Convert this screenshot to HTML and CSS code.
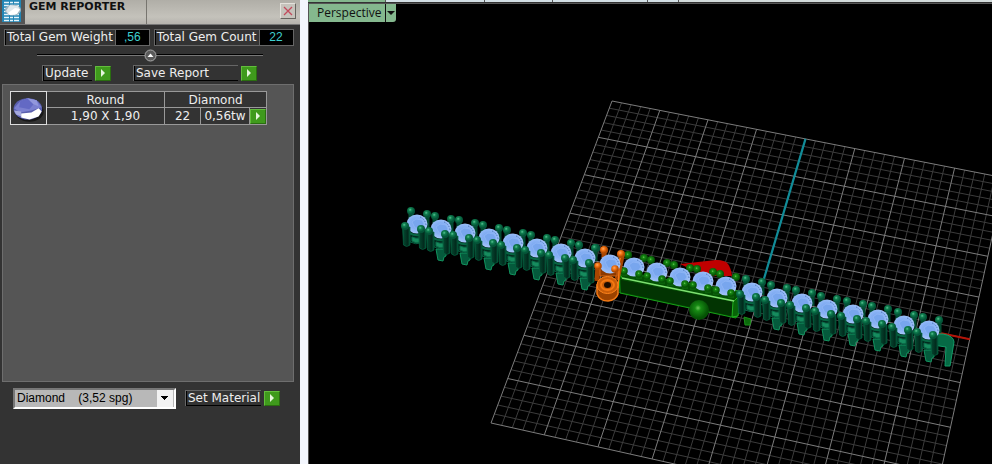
FILE: index.html
```
<!DOCTYPE html>
<html lang="en">
<head>
    <meta charset="UTF-8">
    <title>Gem Reporter</title>
    <link rel="stylesheet" href="styles.css">
</head>
<body>
<div class="app">
    <aside class="reporter">
        <header class="title-bar">
            <svg class="logo" viewBox="0 0 25 24">
                <rect width="25" height="24" fill="#555"/>
                <rect x="2" width="19" height="22" fill="#2185b5"/>
                <path d="M4 2.500H20M4 5.500H20M4 8.500H20M4 11.500H20M4 14.500H20M4 17.500H20M4 20.500H20" stroke="#e4f4fb" stroke-width="1.500" stroke-dasharray="5 1 3 1"/>
                <ellipse cx="13" cy="10" rx="8" ry="5.500" fill="#9fb6c2"/>
                <path d="M6 11L10 5L18 6L20 10L15 15L9 15Z" fill="#dfe8ec"/>
                <path d="M8 13L15 8L20 9L17 14L10 15Z" fill="#fff"/>
            </svg>
            <h1 class="title">GEM REPORTER</h1>
            <button class="close" type="button" aria-label="Close">
                <svg viewBox="0 0 10 10"><path d="M1 1L9 9M9 1L1 9" stroke="#c24a5c" stroke-width="1.300"/></svg>
            </button>
        </header>

        <div class="totals">
            <div class="total"><span class="name">Total Gem Weight</span><span class="value">,56</span></div>
            <div class="total"><span class="name">Total Gem Count</span><span class="value">22</span></div>
        </div>

        <div class="splitter">
            <button class="knob" type="button" aria-label="Collapse">
                <svg viewBox="0 0 13 13">
                    <circle cx="6.500" cy="6.500" r="5.500" fill="#5a5a5a" stroke="#aaa"/>
                    <path d="M3.500 8L6.500 4.500L9.500 8Z" fill="#fff"/>
                </svg>
            </button>
        </div>

        <div class="actions">
            <div class="action update">
                <label class="caption" for="update">Update</label>
                <button class="go" id="update" type="button"></button>
            </div>
            <div class="action save">
                <label class="caption" for="save">Save Report</label>
                <button class="go" id="save" type="button"></button>
            </div>
        </div>

        <div class="list">
            <table class="gems">
                <tr>
                    <td class="thumb" rowspan="2">
                        <svg viewBox="0 0 34 31">
                            <ellipse cx="18" cy="19" rx="14" ry="10" fill="#181818"/>
                            <ellipse cx="16.500" cy="16.500" rx="14" ry="10.500" fill="#5a5fae"/>
                            <path d="M3 16L9 9L16 6L25 8L30 15L20 18L9 20Z" fill="#7b80d0"/>
                            <path d="M9 9L16 6L22 12L18 17L8 15Z" fill="#6369c4"/>
                            <path d="M16 6L25 8L27 14L22 12Z" fill="#9297dc"/>
                            <path d="M3 18L10 19L10 24L5 22Z" fill="#a5a9dc"/>
                            <path d="M10 21L20 20L27 16L30 19L27 24L18 27L10 25Z" fill="#fff"/>
                        </svg>
                    </td>
                    <th class="shape">Round</th>
                    <th colspan="3">Diamond</th>
                </tr>
                <tr>
                    <td>1,90 X 1,90</td>
                    <td class="count">22</td>
                    <td class="weight">0,56tw</td>
                    <td class="pick"><button class="go" type="button" aria-label="Select gem"></button></td>
                </tr>
            </table>
        </div>

        <div class="footer">
            <select class="material" aria-label="Material">
                <option>Diamond &nbsp;&nbsp; (3,52 spg)</option>
            </select>
            <div class="action">
                <label class="caption" for="set">Set Material</label>
                <button class="go" id="set" type="button"></button>
            </div>
        </div>
    </aside>

    <main class="workspace">
        <div class="panes">
            <span class="pane active"></span>
            <span class="pane wide"></span>
            <span class="pane"></span>
            <span class="pane mid"></span>
            <span class="pane small"></span>
            <span class="pane rest"></span>
        </div>
        <div class="viewport">
            <svg class="scene" id="scene" viewBox="309 4 683 460" preserveAspectRatio="xMinYMin slice">
                <defs>
                    <radialGradient id="gem" cx=".45" cy=".45">
                        <stop offset="0" stop-color="#74a4ee"/>
                        <stop offset=".6" stop-color="#86b0f4"/>
                        <stop offset="1" stop-color="#a0c2f8"/>
                    </radialGradient>
                    <radialGradient id="ball-teal" cx=".4" cy=".35">
                        <stop offset="0" stop-color="#5cc496"/>
                        <stop offset=".4" stop-color="#108050"/>
                        <stop offset="1" stop-color="#045438"/>
                    </radialGradient>
                    <radialGradient id="ball-green" cx=".45" cy=".4">
                        <stop offset="0" stop-color="#6cc85a"/>
                        <stop offset=".3" stop-color="#178a14"/>
                        <stop offset="1" stop-color="#055205"/>
                    </radialGradient>
                    <radialGradient id="ball-orange" cx=".4" cy=".35">
                        <stop offset="0" stop-color="#ffa860"/>
                        <stop offset=".5" stop-color="#f07010"/>
                        <stop offset="1" stop-color="#b04a00"/>
                    </radialGradient>
                    <linearGradient id="post">
                        <stop offset="0" stop-color="#06643f"/>
                        <stop offset=".25" stop-color="#04402b"/>
                        <stop offset=".7" stop-color="#022a1d"/>
                        <stop offset="1" stop-color="#055538"/>
                    </linearGradient>
                </defs>
            </svg>
            <div class="view-title">
                <span class="view-name">Perspective</span>
                <button class="view-menu" type="button" aria-label="View menu">
                    <svg viewBox="0 0 10 18"><path d="M1 7H9L5 11Z" fill="#111"/></svg>
                </button>
            </div>
        </div>
    </main>
</div>
<script src="scene.js"></script>
</body>
</html>
```
FILE: styles.css
```
* {
    box-sizing: border-box;
    margin: 0;
    padding: 0;
}

body {
    background: #000;
    color: #eee;
    font: 12px/14px "DejaVu Sans", sans-serif;
}

button {
    display: block;
    border: 0;
    cursor: pointer;
}

svg {
    display: block;
}

.app {
    display: flex;
    height: 100vh;
    overflow: hidden;
}

/* reporter panel */
.reporter {
    display: flex;
    flex-direction: column;
    flex: none;
    width: 300px;
    background: #333;
}

.title-bar {
    display: flex;
    height: 25px;
    padding-right: 4px;
    background: linear-gradient(#b0aea7, #c4c2bb 70%, #b5b3ad);
    border-bottom: 1px solid #777;
    color: #111;
}

.logo {
    width: 25px;
    height: 24px;
}

.title {
    width: 122px;
    padding-left: 4px;
    border-right: 1px solid #77756f;
    font: bold 11px/13px "DejaVu Sans", sans-serif;
}

.close {
    width: 16px;
    height: 16px;
    margin: 3px 0 0 auto;
    padding: 2px;
    background: #c6c3bc;
    border: 1px solid;
    border-color: #e4e2dc #66645f #66645f #e4e2dc;
}

.totals {
    display: flex;
    gap: 4px;
    padding: 4px 5px 0 4px;
}

.total {
    display: flex;
    height: 17px;
    border: 1px solid #666;
    line-height: 15px;
    white-space: nowrap;
}

.total .name {
    padding: 0 2px 0 1px;
    border-left: 1px solid #000;
}

.total .value {
    width: 34px;
    background: #000;
    border-left: 1px solid #666;
    color: #3fd0d0;
    font-family: "Liberation Sans", sans-serif;
    text-align: center;
}

.splitter {
    display: flex;
    justify-content: center;
    height: 13px;
    margin: 3px 37px 0;
    background: linear-gradient(#000, #000) 0 5px / 100% 1px no-repeat,
        linear-gradient(#777, #777) 0 6px / 100% 1px no-repeat;
}

.knob {
    width: 13px;
    height: 13px;
    background: none;
}

.actions {
    display: flex;
    gap: 22px;
    padding: 3px 0 0 42px;
}

.action {
    display: flex;
    align-items: center;
    justify-content: space-between;
}

.update {
    width: 69px;
}

.save {
    width: 124px;
}

.caption {
    flex: 1;
    height: 16px;
    margin-right: 3px;
    padding-left: 2px;
    border: 1px solid #666;
    border-width: 1px 0 0 1px;
    box-shadow: inset 1px 0 #000, inset 0 -1px #000;
    white-space: nowrap;
}

.go {
    width: 16px;
    height: 15px;
    background: #3f9a1c;
    border: 1px solid;
    border-color: #62bd3c #2a6e10 #2a6e10 #62bd3c;
}

.go::before {
    content: "";
    display: block;
    width: 4px;
    margin-left: 5px;
    border: solid transparent;
    border-width: 4px 0 4px 4px;
    border-left-color: #e6f5dd;
}

.list {
    flex: 1;
    margin: 3px 6px 0 2px;
    padding: 6px 7px;
    background: #555;
    border: 1px solid #6e6e6e;
}

.gems {
    width: 257px;
    background: #333;
    border-collapse: collapse;
}

.gems td,
.gems th {
    height: 16px;
    border: 1px solid #999;
    font-weight: normal;
    line-height: 14px;
    text-align: center;
}

.gems .thumb {
    width: 36px;
    border-color: #ddd;
}

.gems .shape {
    width: 119px;
}

.gems .count {
    width: 36px;
}

.gems .weight {
    width: 49px;
}

.footer {
    display: flex;
    align-items: center;
    gap: 9px;
    height: 82px;
    padding: 5px 13px 55px;
}

.material {
    appearance: none;
    width: 163px;
    height: 21px;
    padding-left: 2px;
    background:
        linear-gradient(#000, #000) 146px 6px / 7px 1px no-repeat,
        linear-gradient(#000, #000) 147px 7px / 5px 1px no-repeat,
        linear-gradient(#000, #000) 148px 8px / 3px 1px no-repeat,
        linear-gradient(#000, #000) 149px 9px / 1px 1px no-repeat,
        linear-gradient(#f2f2f2, #f2f2f2) 142px 0 / 16px 100% no-repeat,
        #b8b8b8;
    border: 2px solid;
    border-color: #777 #fff #fff #777;
    border-radius: 0;
    color: #000;
    font: 12px/16px "Liberation Sans", sans-serif;
}

.footer .action {
    width: 95px;
}

/* modelling area */
.workspace {
    display: flex;
    flex: 1;
    flex-direction: column;
    border-left: 8px solid #f3f6fd;
    min-width: 0;
}

.panes {
    display: flex;
    height: 3px;
    background: #555;
    border-bottom: 1px solid #333;
}

.pane {
    width: 67px;
    margin-right: 1px;
    background: #d3e0e6;
}

.pane.active {
    width: 77px;
    background: #84b88e;
}

.pane.wide {
    width: 98px;
}

.pane.mid {
    width: 94px;
}

.pane.small {
    width: 30px;
}

.pane.rest {
    flex: 1;
    margin: 0;
    background: #d3dcdc;
}

.viewport {
    position: relative;
    flex: 1;
    border: 1px solid #555;
    border-width: 1px 0 0 1px;
    overflow: hidden;
}

.scene {
    position: absolute;
    width: 100%;
    height: 100%;
}

.view-title {
    position: absolute;
    display: flex;
    height: 18px;
    background: #84b88e;
    border-bottom-right-radius: 3px;
    color: #111;
    font: 12px/17px "Open Sans", sans-serif;
}

.view-name {
    width: 77px;
    padding-left: 8px;
    border-right: 1px solid #111;
}

.view-menu {
    width: 10px;
    background: none;
}
```
FILE: scene.js
```
var scene = document.getElementById("scene");
var out = "";

// corners of the construction plane on screen
var A = [612, 101], B = [1005, 178], C = [930, 521], D = [491, 423];

// square -> quad projection
var sx = A[0] - B[0] + C[0] - D[0], sy = A[1] - B[1] + C[1] - D[1];
var dx1 = B[0] - C[0], dx2 = D[0] - C[0], dy1 = B[1] - C[1], dy2 = D[1] - C[1];
var det = dx1 * dy2 - dx2 * dy1;
var g = (sx * dy2 - dx2 * sy) / det, h = (dx1 * sy - sx * dy1) / det;

function at(u, v) {
    var w = g * u + h * v + 1;
    var x = ((B[0] - A[0] + g * B[0]) * u + (D[0] - A[0] + h * D[0]) * v + A[0]) / w;
    var y = ((B[1] - A[1] + g * B[1]) * u + (D[1] - A[1] + h * D[1]) * v + A[1]) / w;
    return x.toFixed(1) + " " + y.toFixed(1);
}

function path(d, fill, stroke, width, dash) {
    out += '<path d="' + d + '" fill="' + fill + '" stroke="' + (stroke || "none") + '" stroke-width="' + (width || 1) + '" stroke-dasharray="' + (dash || "none") + '"/>';
}

function ball(x, y, r, color) {
    out += '<circle cx="' + x + '" cy="' + y + '" r="' + r + '" fill="url(#ball-' + color + ')"/>';
}

function gem(x, y) {
    out += '<ellipse cx="' + x + '" cy="' + y + '" rx="10.500" ry="9.500" fill="url(#gem)"/>';
    path("M" + (x - 5) + " " + (y - 2) + "l4 -3l6 1l2 4l-3 4l-6 0z", "#78a6ee", "#94b9f6", 0.7);
    path("M" + (x + 3) + " " + (y - 7) + "q5 2 6 8", "none", "#4a74b8", 1, "1.5 1.5");
}

// grid
var minor = "", major = "";
for (var i = 0; i <= 40; i++) {
    var line = "M" + at(i / 40, 0) + "L" + at(i / 40, 1) + "M" + at(0, i / 40) + "L" + at(1, i / 40);
    if (i % 5) minor += line; else major += line;
}
path(minor, "none", "#3c3c3c");
path(major, "none", "#7c7c7c");
path("M" + at(.5, 0) + "L" + at(.5, .5), "none", "#118c98", 2.2);
path("M" + at(.9, .5) + "L" + at(1, .5), "none", "#b41408", 2);

// red blob behind the bar
path("M680 264L716 260Q725 260 728 264Q731 268 732 276L705 276Z", "#c00000");

function post(x, y, len) {
    path("M" + (x - 3.5) + " " + y + "l1 " + len + "q3 3 6.5 0l0 " + (-len) + "z", "url(#post)", "#05603f", 0.7);
}

function link(x, y, tab) {
    path("M" + (x - 6) + " " + (y - 12) + "v12M" + (x + 10) + " " + (y - 9) + "v12", "none", "#034a31", 5);
    ball(x - 6, y - 13, 4, "teal");
    ball(x + 10, y - 10, 4, "teal");
    if (tab) path("M" + (x - 5) + " " + (y + 20) + "l2 11l5 1l1 -4l2 -1l0 -7z", "#055a3c", "#12935f");
    path("M" + (x - 9) + " " + (y + 4) + "l2 14q6 3 11 1l2 -13z", "#022c1f", "#0a7650", 0.7);
    path("M" + (x - 8) + " " + (y + 9) + "q8 4 15 1", "none", "#086643", 2);
    path("M" + (x - 5) + " " + (y + 13) + "q4 2 8 1v4q-4 2 -8 -1z", "#168c5e", "#0c6e4a");
    gem(x, y);
    post(x - 11, y + 3, 18);
    post(x + 5, y + 6, 18);
    ball(x - 12, y + 2, 4, "teal");
    ball(x + 4, y + 5, 4, "teal");
}

// left chain
ball(596, 248, 4, "teal");
[[417, 224], [441, 229], [465, 233], [489, 238], [513, 243], [537, 248], [561, 253], [585, 258]].forEach(function (p, n) {
    link(p[0], p[1], n > 0);
});

// green bar
path("M619 272L744 292L736 318L620 293Z", "#034d03", "#17a017");
path("M621 280L733 302L732 316L621 292Z", "#023402");
path("M733 302L741 294L738 316L732 317Z", "#086508", "#21b021");
path("M618 268L622 278", "none", "#17a017", 2);
[[634, 267], [657, 272], [680, 277], [703, 281], [726, 286]].forEach(function (p) {
    var x = p[0], y = p[1];
    ball(x - 6, y - 12, 4, "green");
    ball(x + 10, y - 9, 4, "green");
    path("M" + (x - 12) + " " + (y + 1) + "l20 5v9l-20 -4z", "#035003");
    gem(x, y);
    path("M" + (x - 10) + " " + (y + 5) + "v4M" + (x + 5) + " " + (y + 8) + "v4", "none", "#0a600a", 6);
    ball(x - 10, y + 4, 3.8, "green");
    ball(x + 5, y + 7, 3.8, "green");
});
path("M622 278L734 301", "none", "#7de070", 1.5);
ball(699, 310, 10, "green");

// right chain
path("M744 317l1 8l5 0l1 -6z", "#0b6a0b", "#1a921a");
[[752, 292], [777, 298], [802, 303], [827, 309], [853, 314], [878, 319], [904, 325], [929, 330]].forEach(function (p, n) {
    if (n == 7) path("M935 334L943 334Q954 336 954 342L950 366L945 366L946 347L933 345Z", "#066a45", "#139c68");
    link(p[0], p[1], n > 0);
});

// selected hinge
path("M598 265L597 281M604 250L604 258M622 256L617 280", "none", "#a84500", 5);
path("M623 252Q618 260 619 272L618 288", "none", "#f47a14", 1.5);
path("M600 268H617V276H600Z", "#8c3a00", "#d86510");
gem(610, 264);
path("M597 285V294Q600 301 608 301Q616 300 618 294V285Z", "#9c4300", "#f47a14", 1.5);
out += '<ellipse cx="607.500" cy="285" rx="10.500" ry="8.500" fill="#c85c08" stroke="#ff851c"/>';
out += '<ellipse cx="607.500" cy="285" rx="6.500" ry="5" fill="none" stroke="#f27812" stroke-width="2"/>';
out += '<ellipse cx="607.500" cy="285" rx="3.500" ry="3" fill="#1c0c00"/>';
ball(604, 250, 4, "orange");
ball(621, 254, 4, "orange");
ball(598, 266, 3.8, "orange");
ball(615, 269, 3.8, "orange");

scene.insertAdjacentHTML("beforeend", out);
```
